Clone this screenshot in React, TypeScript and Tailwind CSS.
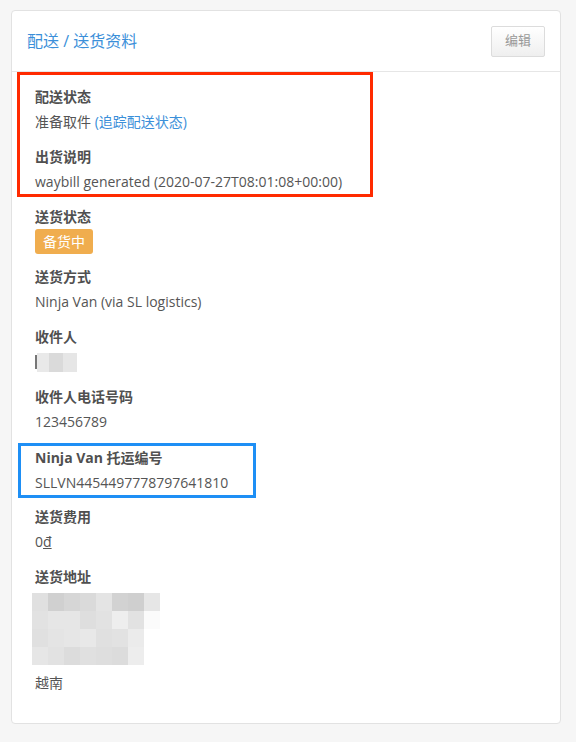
import React from "react";

const font = "font-['Open_Sans','Noto_Sans_CJK_SC',sans-serif]";

// grey mosaic cells hiding the street address
const addressRows: string[][] = [
  ["#e0e0e0", "#d0d0d0", "#d6d6d6", "#dadada", "#e4e4e4", "#d2d2d2", "#cfcfcf", "#e6e6e6"],
  ["#e2e2e2", "#e6e6e6", "#e6e6e6", "#dedede", "#e2e2e2", "#eeeeee", "#e2e2e2", "#fbfbfb"],
  ["#e0e0e0", "#e4e4e4", "#e6e6e6", "#e8e8e8", "#e0e0e0", "#e2e2e2", "#ebebeb", "#ffffff"],
  ["#e6e6e6", "#e2e2e2", "#dcdcdc", "#e0e0e0", "#dedede", "#dcdcdc", "#ededed", "#ffffff"],
];

const Item = ({
  label,
  children,
  className = "",
}: {
  label: string;
  children: React.ReactNode;
  className?: string;
}) => (
  <div className={className}>
    <div className="leading-6 font-bold text-[#505050]">{label}</div>
    <div className="mt-px leading-6 text-[#555]">{children}</div>
  </div>
);

const App = () => {
  return (
    <div className={`min-h-[742px] bg-[#f6f6f6] pt-[10px] text-[14px] ${font}`}>
      <div className="ml-[11px] w-[550px] rounded-[4px] border border-[#e2e2e2] bg-white pb-[28px]">
        <div className="flex h-[61px] items-center justify-between border-b border-[#e6e6e6] pl-[15px] pr-[15px]">
          <div className="text-[16px] text-[#3b8fd9]">配送 / 送货资料</div>
          <button className="h-[31px] w-[54px] rounded-[2px] border border-[#dcdcdc] bg-gradient-to-b from-white to-[#efefef] text-[13px] text-[#999]">
            编辑
          </button>
        </div>

        <div className="pl-[5px]">
          <div className="w-[356px] border-[3px] border-[#ff2a00] pl-[15px] pt-[10px]">
            <Item label="配送状态" className="mb-[11px]">
              准备取件 <span className="text-[#3b8fd9]">(追踪配送状态)</span>
            </Item>
            <Item label="出货说明">waybill generated (2020-07-27T08:01:08+00:00)</Item>
          </div>

          <div className="ml-[18px] mt-[8px] mb-[11px]">
            <div className="leading-6 font-bold text-[#505050]">送货状态</div>
            <span className="inline-block h-[25px] rounded-[3px] bg-[#f0ad4e] px-2 leading-[25px] text-white">
              备货中
            </span>
          </div>

          <Item label="送货方式" className="ml-[18px] mb-[11px]">
            Ninja Van (via SL logistics)
          </Item>

          <Item label="收件人" className="ml-[18px] mb-[11px]">
            <div className="flex h-6 items-center">
              <div className="flex h-[19px] items-center">
                <div className="h-[14px] w-[2px] bg-[#777]" />
                <div className="h-full w-[12px] bg-[#e9e9e9]" />
                <div className="h-full w-[14px] bg-[#dadada]" />
                <div className="h-full w-[14px] bg-[#e6e6e6]" />
              </div>
            </div>
          </Item>

          <Item label="收件人电话号码" className="ml-[18px]">
            123456789
          </Item>

          <div className="ml-px mt-[9px] w-[238px] border-[3px] border-[#1e8ff5] pl-[14px]">
            <Item label="Ninja Van 托运编号">SLLVN4454497778797641810</Item>
          </div>

          <Item label="送货费用" className="ml-[18px] mt-[7px] mb-[11px]">
            0<span className="underline">đ</span>
          </Item>

          <div className="ml-[18px]">
            <div className="leading-6 font-bold text-[#505050]">送货地址</div>
            <div className="-ml-[3px] mt-[4px] flex h-[73px] flex-col overflow-hidden">
              {addressRows.map((row, i) => (
                <div key={i} className="flex h-[18px] shrink-0">
                  {row.map((c, j) => (
                    <div key={j} className="h-full w-4" style={{ backgroundColor: c }} />
                  ))}
                </div>
              ))}
            </div>
            <div className="mt-[5px] leading-6 text-[#555]">越南</div>
          </div>
        </div>
      </div>
    </div>
  );
};

export default App;
